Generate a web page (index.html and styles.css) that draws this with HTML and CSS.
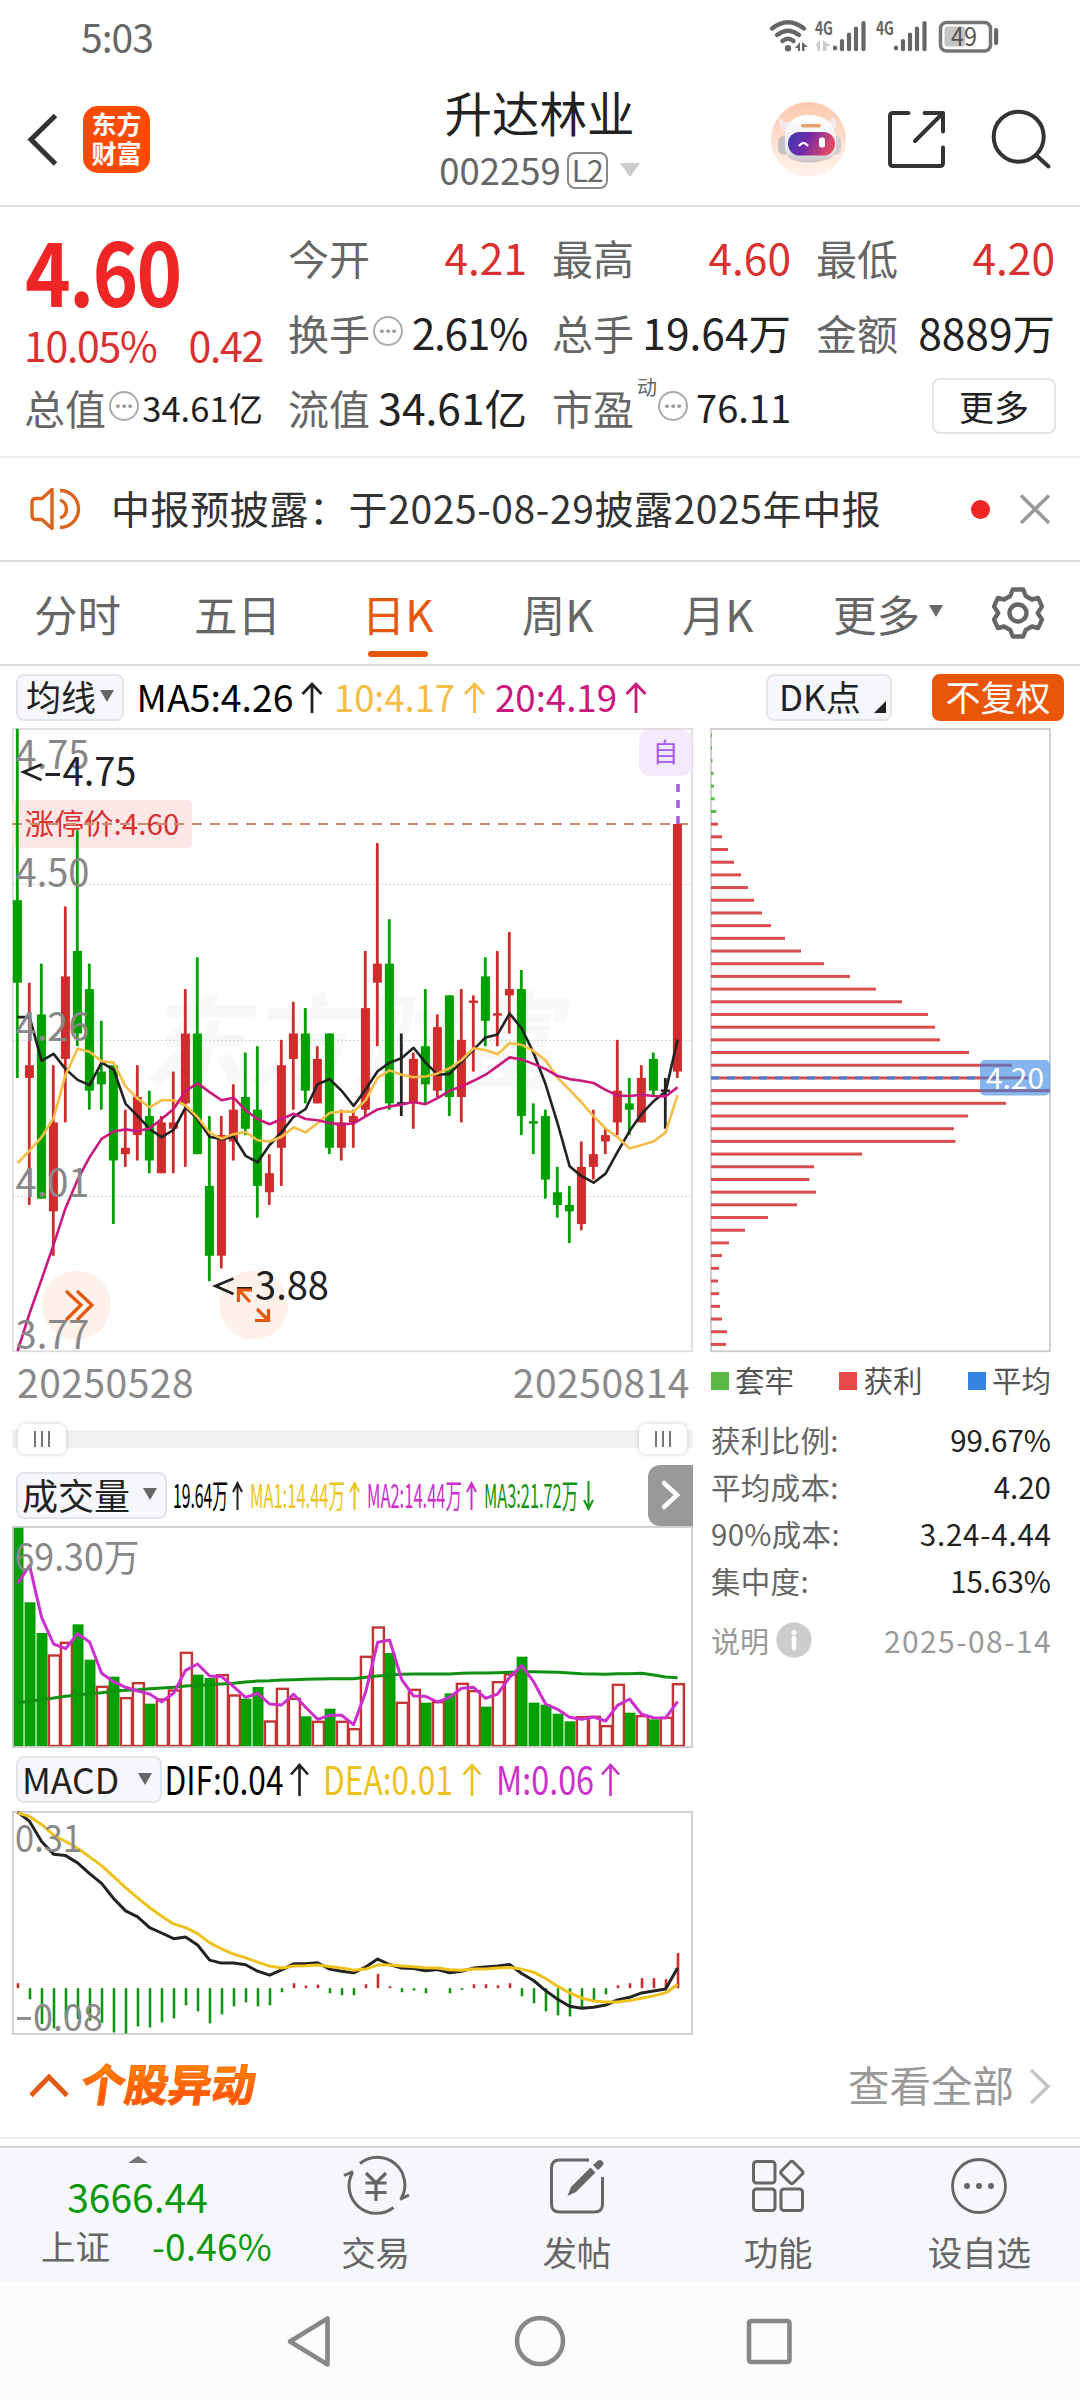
FILE: index.html
```html
<!DOCTYPE html>
<html lang="zh-CN">
<head>
<meta charset="utf-8">
<title>升达林业 002259</title>
<link rel="stylesheet" href="styles.css">
</head>
<body>
<div class="statusbar">
  <span class="clock">5:03</span>
  <svg class="status-icons" viewBox="768 16 234 40" width="234" height="40">
    <g fill="none" stroke="#666" stroke-width="4.4" stroke-linecap="round">
      <path d="M772 28.500Q788 16 804 28.500"/><path d="M777 35Q788 26.500 799 35"/><path d="M782.500 41Q788 36.500 793.500 41"/>
    </g>
    <circle cx="788" cy="48.300" r="3.200" fill="#666"/>
    <path d="M795 48l5-6v9h-2v-3zM802 42l6 5h-3.500v4h-2.500z" fill="#666"/>
    <path d="M815 46l5-6v11h-2.500v-5zM823 40l8 6h-4.500v5H823z" fill="#ccc"/>
    <text class="net" x="815" y="34.500" textLength="18" lengthAdjust="spacingAndGlyphs">4G</text>
    <text class="net" x="876" y="34.500" textLength="18" lengthAdjust="spacingAndGlyphs">4G</text>
    <path d="M835 47.500v1M842 41v8.200M849 34.500v14.700M856 28.500v20.700M863.500 23v26.200M896 47.500v1M903 41v8.200M910 34.500v14.700M917 28.500v20.700M924.500 23v26.200" stroke="#666" stroke-width="4.200" stroke-linecap="round"/>
    <rect x="944.500" y="26.500" width="20.500" height="20" rx="3" fill="#c4c4c4"/>
    <rect x="940.500" y="22.500" width="50" height="28.500" rx="6" fill="none" stroke="#757575" stroke-width="3.500"/>
    <rect x="994" y="28" width="4.200" height="17" rx="2" fill="#666"/>
    <text class="batt" x="951" y="46" textLength="26" lengthAdjust="spacingAndGlyphs">49</text>
  </svg>
</div>

<header class="header">
  <svg class="back" viewBox="26 110 34 60" width="34" height="60"><path d="M55.500 115.500L31 139.500L55.500 164" fill="none" stroke="#333" stroke-width="5"/></svg>
  <div class="logo"><span>东方</span><span>财富</span></div>
  <div class="stock">
    <div class="stock-name">升达林业</div>
    <div class="stock-code"><span>002259</span><span class="level">L2</span><i class="caret"></i></div>
  </div>
  <svg class="header-icons" viewBox="768 96 300 84" width="300" height="84">
    <defs>
      <linearGradient id="halo" x1="0" y1="0" x2="0" y2="1"><stop offset="0" stop-color="#ffc9ae"/><stop offset="1" stop-color="#fff4ee"/></linearGradient>
      <linearGradient id="visor" x1="0" y1="0" x2="1" y2=".25"><stop offset="0" stop-color="#3c3cb4"/><stop offset=".45" stop-color="#6f2aa8"/><stop offset="1" stop-color="#e04868"/></linearGradient>
      <linearGradient id="shell" x1="0" y1="0" x2="0" y2="1"><stop offset="0" stop-color="#fff"/><stop offset=".7" stop-color="#efecee"/><stop offset="1" stop-color="#c8c1c2"/></linearGradient>
    </defs>
    <circle cx="808.500" cy="139.500" r="37.500" fill="url(#halo)"/>
    <path d="M780 117c2 5 7 7 13 5l-4 11c-7-1-12-9-9-16zM833 116c5 7 5 14-4 17l-8-9c7 0 11-3 12-8z" fill="#f0ebec"/>
    <rect x="778" y="136" width="12" height="19" rx="6" fill="#c9c2c5"/><rect x="829" y="136" width="12" height="19" rx="6" fill="#d3ccce"/>
    <path d="M785 139q0-23 23-24q25 0 28 22q2 22-11 23q-16 5-32 0q-9-2-8-21z" fill="url(#shell)"/>
    <rect x="801" y="124" width="20" height="3.600" rx="1.800" fill="#e6a06a"/>
    <rect x="788" y="132" width="47" height="23.500" rx="11.500" fill="url(#visor)"/>
    <path d="M799 146q4.500-6 9 0" fill="none" stroke="#fff" stroke-width="2.200"/><rect x="819" y="137.500" width="6" height="10" rx="2.500" fill="#fff"/>
    <g fill="none" stroke="#333" stroke-width="4" stroke-linecap="round" stroke-linejoin="round">
      <path d="M908.500 113H893q-3 0-3 3V163q0 3 3 3H940q3 0 3-3V147.500M924.500 113H943V131.500M942 114L915 141"/>
      <circle cx="1018.700" cy="136.700" r="25"/><path d="M1037 156l11.500 10.500"/>
    </g>
  </svg>
</header>

<section class="quote">
  <div class="price-box">
    <div class="price">4.60</div>
    <div class="change"><span>10.05%</span><span>0.42</span></div>
  </div>
  <div class="cell"><span>今开</span><b class="up">4.21</b></div>
  <div class="cell"><span>最高</span><b class="up">4.60</b></div>
  <div class="cell"><span>最低</span><b class="up">4.20</b></div>
  <div class="cell"><span>换手</span><i class="tip">···</i><b class="tight">2.61%</b></div>
  <div class="cell"><span>总手</span><b>19.64万</b></div>
  <div class="cell"><span>金额</span><b>8889万</b></div>
  <div class="cell"><span>总值</span><i class="tip">···</i><b class="small">34.61亿</b></div>
  <div class="cell"><span>流值</span><b>34.61亿</b></div>
  <div class="cell"><span>市盈</span><sup>动</sup><i class="tip">···</i><b class="mid">76.11</b></div>
  <div class="cell end"><button class="more">更多</button></div>
</section>

<section class="notice">
  <svg viewBox="28 484 56 48" width="56" height="48" fill="none" stroke="#d9641c" stroke-width="3.400" stroke-linejoin="round"><path d="M52 488.500V527.500L42 518.500H36q-4 0-4-4V501.500q0-4 4-4H42zM60 489.500a18.500 18.500 0 0 1 0 37M60 499a9.500 9.500 0 0 1 0 18"/></svg>
  <p>中报预披露：于2025-08-29披露2025年中报</p>
  <i class="dot"></i>
  <svg viewBox="1018 492 34 32" width="34" height="32"><path d="M1021 494.500l28 27.500M1049 494.500l-28 27.500" stroke="#999" stroke-width="3.600"/></svg>
</section>

<nav class="tabs">
  <a>分时</a><a>五日</a><a class="active">日K</a><a>周K</a><a>月K</a><a class="tab-more">更多<i class="caret dark"></i></a>
  <svg class="gear" viewBox="-28 -28 56 56" width="56" height="56" fill="none" stroke="#666" stroke-width="4.400" stroke-linejoin="round">
    <path d="M-5.500-23.500H5.500L8-17L14.500-13.500L21-15L25-6.500L20.500 0L25 6.500L21 15L14.500 13.500L8 17L5.500 23.500H-5.500L-8 17L-14.500 13.500L-21 15L-25 6.500L-20.500 0L-25-6.500L-21-15L-14.500-13.500L-8-17Z" transform="scale(.96 1)"/><circle r="8.500"/>
  </svg>
</nav>

<div class="ma-row">
  <span class="chip">均线<i class="caret dark"></i></span>
  <svg viewBox="136 672 520 50" width="520" height="50" class="ind">
    <text x="136.500" y="712" textLength="157" lengthAdjust="spacingAndGlyphs">MA5:4.26</text>
    <text x="334" y="712" textLength="121" lengthAdjust="spacingAndGlyphs" fill="#f5bd47">10:4.17</text>
    <text x="495" y="712" textLength="122" lengthAdjust="spacingAndGlyphs" fill="#c9187e">20:4.19</text>
    <g fill="none" stroke-width="2.800"><path d="M312 713V684M302.500 694L312 684L321.500 694" stroke="#222"/><path d="M474.500 713V684M465 694L474.500 684L484 694" stroke="#f5bd47"/><path d="M636 713V684M626.500 694L636 684L645.500 694" stroke="#c9187e"/></g>
  </svg>
  <span class="chip dk">DK点<i class="corner"></i></span>
  <span class="chip solid">不复权</span>
</div>

<main class="charts">
  <div class="left">
    <svg id="kline" class="chart" viewBox="12 728 681 624" width="681" height="624"></svg>
    <div class="dates"><span>20250528</span><span>20250814</span></div>
    <div class="slider"><i class="handle"></i><i class="handle"></i></div>
    <div class="sub-head vol-head">
      <span class="chip vol">成交量<i class="caret dark"></i></span>
      <svg viewBox="170 1471 440 46" width="440" height="46" class="ind thin">
        <text x="173" y="1507" textLength="55" lengthAdjust="spacingAndGlyphs">19.64万</text>
        <text x="250" y="1507" textLength="95" lengthAdjust="spacingAndGlyphs" fill="#edc21d">MA1:14.44万</text>
        <text x="367" y="1507" textLength="95" lengthAdjust="spacingAndGlyphs" fill="#cd2fcd">MA2:14.44万</text>
        <text x="484" y="1507" textLength="94" lengthAdjust="spacingAndGlyphs" fill="#129412">MA3:21.72万</text>
        <g fill="none" stroke-width="2"><path d="M237.500 1509V1482M233 1491L237.500 1482L242 1491" stroke="#222"/><path d="M354.500 1509V1482M350 1491L354.500 1482L359 1491" stroke="#edc21d"/><path d="M471.500 1509V1482M467 1491L471.500 1482L476 1491" stroke="#cd2fcd"/><path d="M588.500 1480V1508M584 1499L588.500 1508L593 1499" stroke="#129412"/></g>
      </svg>
      <span class="next"><svg viewBox="0 0 20 30" width="20" height="30"><path d="M3 3L16 15L3 27" fill="none" stroke="#fff" stroke-width="4.500" stroke-linecap="round"/></svg></span>
    </div>
    <svg id="volume" class="chart" viewBox="12 1526 681 222" width="681" height="222"></svg>
    <div class="sub-head macd-head">
      <span class="chip macd">MACD<i class="caret dark"></i></span>
      <svg viewBox="164 1756 470 46" width="470" height="46" class="ind big">
        <text x="164.500" y="1793.500" textLength="119" lengthAdjust="spacingAndGlyphs">DIF:0.04</text>
        <text x="323" y="1793.500" textLength="130" lengthAdjust="spacingAndGlyphs" fill="#edc21d">DEA:0.01</text>
        <text x="496" y="1793.500" textLength="98" lengthAdjust="spacingAndGlyphs" fill="#cd2fcd">M:0.06</text>
        <g fill="none" stroke-width="2.600"><path d="M299.500 1795V1764M291 1773.500L299.500 1764L308 1773.500" stroke="#222"/><path d="M472 1795V1764M463.500 1773.500L472 1764L480.500 1773.500" stroke="#edc21d"/><path d="M610.500 1795V1764M602 1773.500L610.500 1764L619 1773.500" stroke="#cd2fcd"/></g>
      </svg>
    </div>
    <svg id="macd" class="chart" viewBox="12 1811 681 224" width="681" height="224"></svg>
  </div>
  <aside class="right">
    <svg id="chips" class="chart" viewBox="710 728 342 624" width="342" height="624"></svg>
    <div class="legend"><span><i class="sq g"></i>套牢</span><span><i class="sq r"></i>获利</span><span><i class="sq b"></i>平均</span></div>
    <dl class="stats">
      <div><dt>获利比例:</dt><dd>99.67%</dd></div>
      <div><dt>平均成本:</dt><dd>4.20</dd></div>
      <div><dt>90%成本:</dt><dd class="wide">3.24-4.44</dd></div>
      <div><dt>集中度:</dt><dd>15.63%</dd></div>
    </dl>
    <div class="explain"><span>说明</span><svg viewBox="0 0 36 36" width="36" height="36"><circle cx="18" cy="18" r="17.700" fill="#ccc"/><circle cx="18" cy="10.500" r="2.600" fill="#fff"/><path d="M18 16V26.500" stroke="#fff" stroke-width="4.500" stroke-linecap="round"/></svg><span class="date">2025-08-14</span></div>
  </aside>
</main>

<section class="moves">
  <svg viewBox="28 2074 42 28" width="42" height="28"><path d="M31 2097.500L49 2079L67 2097.500" fill="none" stroke="#df5a14" stroke-width="4.800"/></svg>
  <h2>个股异动</h2>
  <span class="all">查看全部</span>
  <svg viewBox="1028 2066 24 40" width="24" height="40"><path d="M1031 2070L1048 2086.500L1031 2103" fill="none" stroke="#c4c4c4" stroke-width="3.500"/></svg>
</section>

<footer class="toolbar">
  <div class="index">
    <i class="caret upward"></i>
    <div class="index-value">3666.44</div>
    <div class="index-row"><span>上证</span><span class="down">-0.46%</span></div>
  </div>
  <a><svg viewBox="-34 -30 68 60" width="68" height="60" fill="none" stroke="#666" stroke-width="3"><path d="M-16-22.500A27.500 27.500 0 0 1 25.500 12M24 13.500L33 9M17.500 21.500A27.500 27.500 0 0 1-23.500-13.500M-23-14.500L-32-10.500" stroke-linejoin="round"/><path d="M-10-13L0-3L10-13M0-3V15M-10.500-3H10.500M-10.500 6.500H10.500" stroke-width="3.200"/></svg>交易</a>
  <a><svg viewBox="-34 -30 68 60" width="68" height="60" fill="none" stroke="#666" stroke-width="3"><path d="M12-26H-17.500Q-25.500-26-25.500-18V18Q-25.500 26-17.500 26H17.500Q25.500 26 25.500 18V-9"/><path d="M13.500-18.500L18.500-13.500L-1 6L-9.500 10L-6 1zM16-21L21-25.500Q25-27 26.500-23Q27-21 21-16Z" fill="#666" stroke="none"/></svg>发帖</a>
  <a><svg viewBox="-34 -30 68 60" width="68" height="60" fill="none" stroke="#666" stroke-width="3"><rect x="-24.500" y="-24.500" width="21.500" height="21.500" rx="3"/><rect x="-24.500" y="3" width="21.500" height="21.500" rx="3"/><rect x="3" y="3" width="21.500" height="21.500" rx="3"/><rect x="5.300" y="-22" width="17" height="17" rx="2.500" transform="rotate(45 13.800 -13.500)"/></svg>功能</a>
  <a><svg viewBox="-34 -30 68 60" width="68" height="60" fill="none" stroke="#666" stroke-width="2.800"><circle r="26.500"/><g fill="#666" stroke="none"><circle cx="-12" r="3"/><circle r="3"/><circle cx="12" r="3"/></g></svg>设自选</a>
</footer>

<div class="sysnav">
  <svg viewBox="270 2300 540 80" width="540" height="80" fill="none" stroke="#888" stroke-width="4.600" stroke-linejoin="round"><path d="M327.500 2318.500V2364.500L290 2341.500Z"/><circle cx="540" cy="2341" r="23"/><rect x="749" y="2321" width="40.500" height="41" rx="2"/></svg>
</div>
<script src="charts.js"></script>
</body>
</html>
```
FILE: styles.css
```css
* { box-sizing: border-box; }
body {
  margin: 0;
  width: 1080px;
  background: #fff;
  color: #222;
  font-family: "Noto Sans CJK SC", "Noto Sans", sans-serif;
}
i, b { font-style: normal; font-weight: 400; }
svg { display: block; flex: none; overflow: visible; }

.statusbar { height: 80px; display: flex; justify-content: space-between; padding: 16px 78px 0 81px; }
.clock { font-size: 39px; line-height: 40px; color: #666; letter-spacing: -1px; }
.net { font: 700 18px "Noto Sans CJK SC", sans-serif; fill: #666; }
.batt { font: 400 25px "Noto Sans CJK SC", sans-serif; fill: #555; }

.header { height: 127px; border-bottom: 2px solid #ddd; display: flex; padding: 0 12px 0 26px; }
.back { margin-top: 30px; }
.logo { width: 67px; height: 67px; margin: 26px 0 0 23px; padding: 3px 0; border-radius: 15px; background: #fd4a05; color: #fff; display: flex; flex-direction: column; align-items: center; font-weight: 700; font-size: 25px; line-height: 29px; }
.stock { flex: 1; display: flex; flex-direction: column; align-items: center; padding-left: 161px; }
.stock-name { font-size: 47.500px; line-height: 60px; margin-top: 2px; white-space: nowrap; }
.stock-code { display: flex; align-items: center; height: 36px; margin-top: 10px; font-size: 36.500px; line-height: 36px; color: #666; }
.level { width: 41px; height: 37px; margin-left: 6px; border: 2px solid #888; border-radius: 8px; font-size: 30px; line-height: 31px; text-align: center; letter-spacing: -1px; }
.caret { display: inline-block; width: 0; height: 0; border: 10.5px solid transparent; border-top: 14px solid #ccc; border-bottom: 0; margin-left: 12px; }
.caret.dark { border-width: 12px 7.5px 0; border-top-color: #666; margin: 0; }
.header-icons { margin-top: 16px; }

.quote { height: 251px; border-bottom: 2px solid #eee; padding: 14px 25px 0; display: grid; grid-template-columns: repeat(4, 238px); grid-template-rows: repeat(3, 75px); column-gap: 26px; }
.price-box { grid-row: span 2; color: #f02525; }
.price { font-size: 87px; font-weight: 700; line-height: 96px; letter-spacing: -2px; transform: scaleX(.893); transform-origin: left; }
.change { display: flex; justify-content: space-between; font-size: 41px; line-height: 50px; color: #d93030; letter-spacing: -1.300px; margin: 2px 0 0 -1px; }
.cell { display: flex; align-items: center; font-size: 41px; line-height: 70px; height: 70px; color: #666; white-space: nowrap; margin: 1px 0 0 -1px; }
.cell b { margin-left: auto; font-size: 42.500px; letter-spacing: 0; color: #222; }
.cell b.up { color: #d93030; }
.cell b.tight { letter-spacing: -1.300px; }
.cell b.small { font-size: 34.500px; }
.cell b.mid { font-size: 38px; }
.cell.end { justify-content: flex-end; }
.cell sup { font-size: 20px; line-height: 20px; align-self: flex-start; margin: 5px 0 0 3px; }
.tip { width: 30px; height: 30px; border: 2.500px solid #aaa; border-radius: 50%; margin: -3px 0 0 3px; font: 700 22px/25px "Noto Sans", sans-serif; text-align: center; color: #999; }
.cell sup + .tip { margin-left: 1px; }
.more { width: 124px; height: 56px; margin: -3px -1px 0 0; border: 2px solid #e4e4e4; border-radius: 8px; background: #fff; font: 400 35px/48px "Noto Sans CJK SC", sans-serif; color: #222; padding: 0; }

.notice { height: 104px; border-bottom: 2px solid #ddd; display: flex; align-items: center; padding: 0 28px; }
.notice p { margin: 0 0 5px 27px; font-size: 39px; line-height: 50px; color: #333; letter-spacing: .6px; white-space: nowrap; }
.dot { width: 19px; height: 19px; border-radius: 50%; background: #f02525; margin: 0 28px 0 auto; }

.tabs { height: 104px; border-bottom: 2px solid #ddd; display: flex; align-items: center; padding: 0 33px; color: #666; }
.tabs a { flex: none; font-size: 43.500px; line-height: 103px; height: 102px; width: 160px; padding-right: 71px; display: flex; justify-content: center; white-space: nowrap; position: relative; }
.tabs a.active { color: #e5570c; }
.tabs a.active::after { content: ""; position: absolute; left: 15px; bottom: 7px; width: 60px; height: 6px; border-radius: 3px; background: #e5570c; }
.tabs .tab-more { width: 120px; padding: 0; align-items: center; justify-content: flex-start; gap: 9px; }
.tabs .tab-more .caret { margin-top: -4px; }
.gear { margin: 0 1px 0 auto; }

.ma-row { height: 62px; display: flex; align-items: center; padding: 0 16px; }
.chip { height: 47px; border: 2px solid #e2e5ea; border-radius: 8px; background: #f6f7fa; display: flex; align-items: center; gap: 4px; font-size: 35px; line-height: 40px; padding: 0 8px 2px; width: 108px; flex: none; white-space: nowrap; }
.ma-row .ind { margin-left: 12px; }
.ind text { font: 400 37px "Noto Sans CJK SC", sans-serif; }
.ind.thin text { font-size: 33px; }
.ind.big text { font-size: 39px; }
.dk { width: 126px; padding-left: 11px; margin-left: 110px; position: relative; }
.corner { position: absolute; right: 4px; bottom: 6px; border-left: 12px solid transparent; border-bottom: 12px solid #222; }
.solid { width: 132px; margin-left: 40px; background: #e9560a; border-color: #e9560a; color: #fff; justify-content: center; }

.charts { display: grid; grid-template-columns: 681px 342px; column-gap: 17px; padding-left: 12px; height: 1307px; }
.chart { font-family: "Noto Sans CJK SC", sans-serif; }
.dates { display: flex; justify-content: space-between; padding: 0 3px 0 5px; height: 62px; font-size: 39px; line-height: 59px; color: #8a8a8a; letter-spacing: .5px; }
.slider { height: 50px; padding: 10px 6px; display: flex; justify-content: space-between; background: linear-gradient(#f1f1f4, #f1f1f4) 0 16px / 100% 18px no-repeat; }
.handle { width: 48px; height: 30px; border-radius: 7px; background: linear-gradient(90deg, #777 2px, transparent 2px 7px, #777 7px 9px, transparent 9px 14px, #777 14px 16px) center / 16px 16px no-repeat #fff; box-shadow: 0 0 5px #ccc; }
.sub-head { display: flex; align-items: center; }
.vol-head { height: 62px; padding-left: 4px; }
.vol { width: 151px; justify-content: space-between; padding-left: 4px; font-size: 36px; }
.macd-head { height: 63px; padding-left: 4px; }
.macd { width: 146px; justify-content: space-between; padding-left: 4px; font-size: 35.500px; }
.vol-head .ind { margin-left: 3px; }
.macd-head .ind { margin-left: 2px; }
.next { width: 45px; height: 61px; margin-left: auto; border-radius: 12px 0 0 12px; background: #999; display: flex; align-items: center; justify-content: center; }

.legend { display: flex; justify-content: space-between; height: 62px; font-size: 29.500px; line-height: 53px; color: #555; padding: 0 1px; }
.legend span { display: flex; align-items: center; gap: 6px; height: 54px; }
.sq { width: 18px; height: 18px; margin-top: 3px; }
.g { background: #5cb947; }
.r { background: #e84a4a; }
.b { background: #3583e3; }
.stats { margin: 0; padding: 2px 1px 0 1px; font-size: 29.500px; line-height: 47px; }
.stats div { display: flex; justify-content: space-between; }
.stats dt { color: #666; letter-spacing: .3px; }
.stats dd { margin: 0; }
.stats .wide { letter-spacing: .8px; margin-right: -.8px; }
.explain { display: flex; align-items: center; height: 72px; padding: 0 0 0 1px; font-size: 29px; color: #999; gap: 7px; }
.date { margin-left: auto; font-size: 30px; letter-spacing: 1.400px; }

.moves { height: 104px; border-bottom: 2px solid #eee; display: flex; align-items: center; padding: 0 28px; margin-bottom: 7px; }
.moves h2 { margin: 0 0 6px 12px; font-size: 43.500px; line-height: 60px; font-weight: 700; transform: skewX(-8deg); background: linear-gradient(#ff8a00 20%, #ff560f 70%); -webkit-background-clip: text; background-clip: text; color: transparent; -webkit-text-stroke: 1.200px #ff6a0a; }
.all { margin: 0 14px 4px auto; font-size: 41.500px; line-height: 60px; color: #999; }

.toolbar { height: 136px; border-top: 2px solid #d3d7db; background: #f6f7fa; display: grid; grid-template-columns: 275px repeat(4, 201.250px); color: #666; font-size: 34.500px; line-height: 44px; }
.toolbar a { display: flex; flex-direction: column; align-items: center; padding-top: 8px; gap: 13px; }
.index { display: flex; flex-direction: column; align-items: center; padding-top: 8px; }
.caret.upward { border-width: 0 10px 7px; border-bottom: 7px solid #777; margin: 0; }
.index-value { font-size: 39px; line-height: 50px; margin-top: 8px; color: #0c980c; }
.index-row { align-self: stretch; display: flex; justify-content: space-between; padding: 0 3px 0 41px; line-height: 48px; }
.down { color: #0c980c; font-size: 37px; letter-spacing: .2px; }
.sysnav { height: 118px; background: #fcfcfc; display: flex; justify-content: center; padding-top: 18px; }
```
FILE: charts.js
```js
const RED = '#cd2d2d', GREEN = '#00a000', INK = '#222';
const STEP = 12, X0 = 17.6;
const cx = i => X0 + STEP * i;

const line = (values, color, toY, width = 3) =>
  `<polyline fill="none" stroke="${color}" stroke-width="${width}" stroke-linejoin="round" points="${values.map((v, i) => cx(i).toFixed(1) + ',' + toY(v).toFixed(1)).join(' ')}"/>`;
const frame = (x, y, w, h, color) =>
  `<rect x="${x}" y="${y}" width="${w}" height="${h}" fill="none" stroke="${color}" stroke-width="1.8"/>`;
const label = (x, y, text, size, color, len) =>
  `<text x="${x}" y="${y}" font-size="${size}" fill="${color}"${len ? ` textLength="${len}" lengthAdjust="spacingAndGlyphs"` : ''}>${text}</text>`;

// Daily candles: colour, high, body top, body bottom, low (in cents)
const candles = `g475,448,435,420 r435,422,420,400 g438,430,401,401 r422,413,399,392 r447,436,423,413 g459,440,427,425
g438,434,418,415 g429,421,419,415 g422,422,407,397 r415,409,408,406 r422,417,411,407 g418,414,407,405 r414,413,405,405
r421,413,412,405 r434,427,416,406 g439,427,408,408 g414,403,392,388 r414,411,392,390 r419,415,410,407 g424,417,412,411
g425,415,403,398 r408,405,402,400 r426,422,409,403 r432,427,423,415 g431,427,418,416 r425,423,416,416 g427,427,409,408
r415,413,409,407 r415,414,413,409 r440,431,415,414 r457,438,435,425 g445,438,416,415 k427,416,416,414 r424,423,416,412
g434,425,419,416 r430,428,418,417 g433,433,417,414 r434,426,417,413 r433,432,432,421 g439,436,429,425 r440,430,430,425
r443,434,433,427 g437,434,414,411 g416,413,413,408 g415,414,404,401 g406,402,400,398 g403,400,399,394 r410,406,397,396
r415,408,406,404 r412,411,410,408 r426,418,413,411 g420,416,415,411 r422,420,413,413 g424,423,418,417 k420,418,418,412
r460,460,421,420`.split(/\s+/).map(s => [s[0], ...s.slice(1).split(',').map(Number)]);
const priceY = c => 728.7 + (475 - c) * 6.35;
const maY = v => 720 + v / 2.306;
const tint = { r: RED, g: GREEN, k: INK };

const ma5 = [685,685,786,770,805,830,842,790,806,885,913,943,962,945,893,920,961,967,961,1005,1020,980,950,915,897,840,828,855,890,852,810,790,780,756,790,818,816,788,760,732,725,677,711,768,840,930,1029,1052,1067,1046,996,948,908,879,857,737];
const ma10 = [1022,993,962,918,818,758,765,787,790,845,873,893,877,877,889,916,952,965,955,950,969,972,961,939,951,930,906,903,903,877,825,808,818,824,822,815,803,784,757,761,771,745,749,763,785,825,853,882,914,942,962,988,980,972,951,865];
const ma20 = [1455,1368,1290,1210,1125,1060,1008,966,949,944,948,942,920,897,855,838,858,877,871,900,920,932,920,908,920,923,929,933,930,914,898,891,887,881,886,872,855,845,832,818,798,778,783,793,805,821,828,832,837,853,866,867,864,867,868,847];

let k = '<text x="142" y="1080" font-size="104" font-weight="700" font-style="italic" fill="#f8f8f8">东方财富</text>';
k += frame(12.9, 729, 679.2, 622.3, '#ddd');
for (const y of [884.4, 1040.4, 1196.4]) k += `<path d="M13 ${y}H692" stroke="#d4d4d4" stroke-dasharray="2 2"/>`;
k += '<rect x="12" y="800" width="180" height="48" rx="5" fill="#fde6e6"/>';
k += label(24.5, 834.5, '涨停价:4.60', 29, '#d93030', 155);
k += '<path d="M12 824H690" stroke="#c98c6c" stroke-width="1.8" stroke-dasharray="10 8"/>';
candles.forEach(([t, h, a, b, l], i) => {
  const x = cx(i) - .3, c = tint[t], y = priceY(a), height = Math.max(2.4, priceY(b) - y);
  k += `<path d="M${x} ${priceY(h)}V${priceY(l)}" stroke="${c}" stroke-width="2.800"/>`;
  k += `<rect x="${x - 4.4}" y="${height > 3 ? y : y - 1.2}" width="9" height="${height}" fill="${c}"/>`;
});
k += line(ma5, '#222', maY, 2.600) + line(ma10, '#f5bd47', maY, 2.600) + line(ma20, '#c9187e', maY, 2.600);
k += '<circle cx="76.500" cy="1305" r="34.500" fill="#fbd9c6" opacity=".36"/><circle cx="253.500" cy="1305" r="34.500" fill="#fbd9c6" opacity=".36"/>';
[['4.75', 768.5], ['4.50', 886.5], ['4.26', 1041], ['4.01', 1197], ['3.77', 1349]].forEach(([t, y]) => k += label(15.5, y, t, 39, '#888', 74));
k += '<g fill="none" stroke="#222" stroke-width="2.800"><path d="M41.500 764.500L23.500 772L41.500 780M45.500 774.500H60"/><path d="M233.500 1278.500L215.500 1286L233.500 1294M237 1288.500H252"/></g>';
k += label(62.5, 786, '4.75', 39, '#222', 74) + label(255, 1300, '3.88', 39, '#222', 74);
k += '<g fill="none" stroke="#e5570c" stroke-width="3.200"><path d="M66 1291L81 1305L66 1320M77 1291L92 1305L77 1320"/><path d="M238.500 1302V1290H252M239 1290L250 1302M268.500 1309V1320.500H255M268 1320L257 1309"/></g>';
k += '<path d="M678 824V776" stroke="#a65ee6" stroke-width="3.600" stroke-dasharray="8 8"/><rect x="639" y="730" width="53" height="46" rx="10" fill="#f4eafe"/>' + label(652.500, 762, '自', 26, '#a75cf0');
document.getElementById('kline').innerHTML = k;

// Volume: colour and bar top, on a baseline of 1038
const bars = 'g380 g607 g699 r765 r727 g673 g779 r859 g830 r893 r848 g911 r897 r870 r757 g824 g834 r824 r885 g896 g861 r963 r865 r895 g949 r964 g926 r964 r986 r769 r681 g759 r907 r868 g908 r905 g880 r850 r872 g920 r845 r822 g770 g908 g914 g941 g964 r950 r949 r977 r853 g938 r947 g958 r952 r851'.split(' ');
const vma = [550,497,652,732,746,701,726,820,845,862,873,882,905,880,811,792,828,830,860,892,880,912,915,883,922,958,946,946,974,877,727,720,838,888,889,906,892,865,862,895,882,832,797,845,912,928,952,958,951,963,916,897,943,953,954,905];
const vlong = [909,904,899,894,889,885,881,878,874,871,869,866,864,862,858,856,854,852,850,846,843,842,840,839,838,837,836,836,836,832,828,825,823,822,822,822,822,820,819,819,818,817,815,815,816,817,819,821,822,823,821,821,820,825,831,833];
const volY = v => 1400 + v / 3;
let v = '';
bars.forEach((s, i) => {
  const y = volY(+s.slice(1)), x = cx(i) + .3;
  v += s[0] === 'g'
    ? `<rect x="${x - 5.3}" y="${y}" width="10.900" height="${1746 - y}" fill="${GREEN}"/>`
    : `<rect x="${x - 5}" y="${y + .5}" width="11" height="${1745.5 - y}" fill="#fff" stroke="#c43434" stroke-width="2.400"/>`;
});
v += frame(12.9, 1526.9, 679.2, 220.200, '#ccc');
v += line(vlong, '#109010', volY) + line(vma, '#cd2fcd', volY);
v += label(14.500, 1571, '69.30万', 38, '#888', 125);
document.getElementById('volume').innerHTML = v;

const dif = [215,243,303,341,345,367,399,428,473,510,528,560,576,593,588,612,657,666,666,671,690,702,686,668,668,665,684,690,695,678,654,670,681,682,689,685,695,690,681,678,675,670,697,718,748,774,795,801,798,791,776,768,755,749,743,681];
const dea = [218,228,252,284,303,323,349,375,408,441,471,500,526,549,560,578,605,624,639,650,663,675,681,675,674,672,676,681,687,684,672,672,675,677,680,681,686,687,684,684,681,679,684,693,712,735,755,770,779,782,782,778,771,764,755,730];
const hist = [726,774,848,861,833,833,838,844,873,876,855,858,843,831,792,810,846,819,795,783,795,792,753,726,733,730,756,762,762,729,698,735,753,748,756,741,756,746,729,729,732,726,765,786,810,822,825,800,778,759,732,726,711,711,714,636];
const mY = v => 1740 + v / 2.985;
let m = frame(12.9, 1811.9, 679.2, 222, '#ccc');
hist.forEach((h, i) => {
  if (h !== 741) m += `<path d="M${cx(i) + .4} 1988.200V${mY(h)}" stroke="${h < 741 ? RED : '#129412'}" stroke-width="2.600"/>`;
});
m += line(dif, '#222', mY) + line(dea, '#edc21d', mY);
m += label(15, 1851.500, '0.31', 37, '#888', 67) + '<path d="M17 2018.500H31" stroke="#888" stroke-width="2.800"/>' + label(33, 2030.500, '0.08', 37, '#888', 70);
document.getElementById('macd').innerHTML = m;

// Cost distribution: bar lengths from the highest price to the lowest
const costs = [1,1,1.500,2.500,3,3.500,5.500,7,11,17,23,30,37,43,51,60,74,90,113,139,165,191,217,224,229,258,301,317,339,295,257,243,244.500,151,103,98.500,105,86,57,34,18,11,8,7,8,9,11,16,15];
let c = frame(711, 729, 339, 622.3, '#ccc');
costs.forEach((w, i) => {
  const y = 735.2 + 12.69 * i;
  c += `<rect x="711" y="${y - 1.4}" width="${w}" height="3" fill="${i < 7 ? '#5cb947' : '#d94c4c'}"/>`;
});
c += '<path d="M711 1077.900H980" stroke="#3f7fd8" stroke-width="3" stroke-dasharray="8 8"/>';
c += '<rect x="980" y="1060" width="70" height="35.500" rx="5" fill="#3583e3" opacity=".6"/>' + label(986, 1088.500, '4.20', 29, '#fff', 58);
document.getElementById('chips').innerHTML = c;
```
